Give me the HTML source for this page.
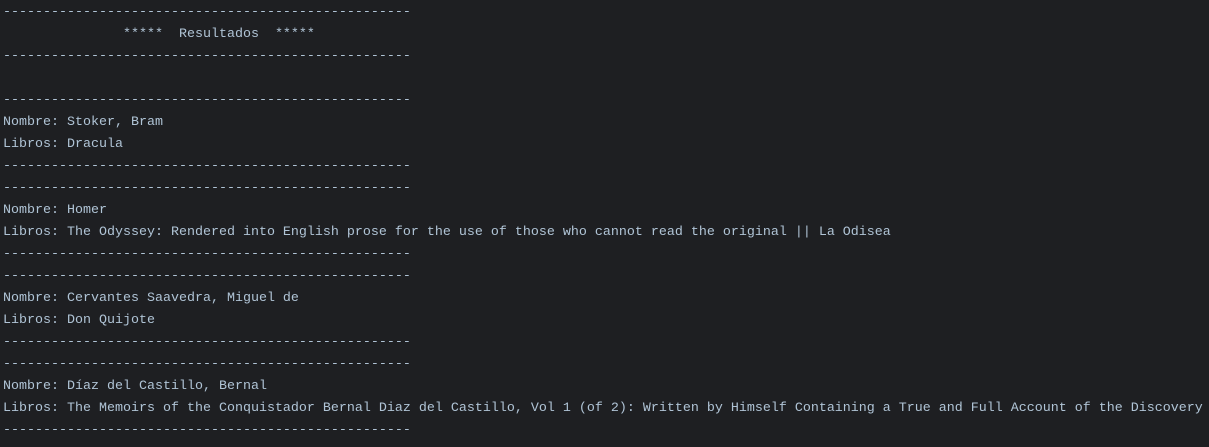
<!DOCTYPE html><html><head><style>
html,body{margin:0;background:#1e1f22;width:1209px;height:447px;overflow:hidden}
pre{margin:0;padding:2px 0 0 3px;font-family:"Liberation Mono",monospace;font-size:13.33px;line-height:22px;color:#b0c4d6;white-space:pre}
</style></head><body><pre>---------------------------------------------------
               *****  Resultados  *****
---------------------------------------------------

---------------------------------------------------
Nombre: Stoker, Bram
Libros: Dracula
---------------------------------------------------
---------------------------------------------------
Nombre: Homer
Libros: The Odyssey: Rendered into English prose for the use of those who cannot read the original || La Odisea
---------------------------------------------------
---------------------------------------------------
Nombre: Cervantes Saavedra, Miguel de
Libros: Don Quijote
---------------------------------------------------
---------------------------------------------------
Nombre: Díaz del Castillo, Bernal
Libros: The Memoirs of the Conquistador Bernal Diaz del Castillo, Vol 1 (of 2): Written by Himself Containing a True and Full Account of the Discovery
---------------------------------------------------</pre></body></html>
